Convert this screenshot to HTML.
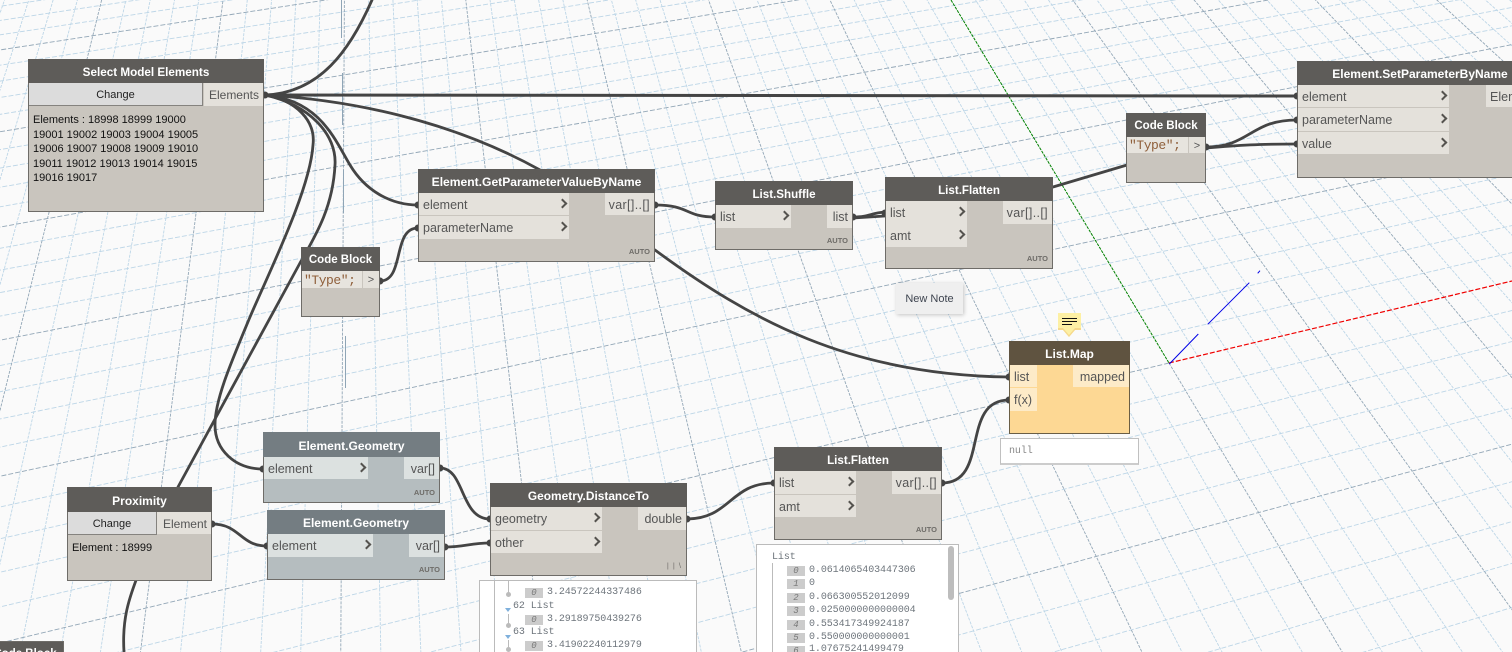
<!DOCTYPE html>
<html><head><meta charset="utf-8"><title>Dynamo graph</title>
<style>
html,body{margin:0;padding:0;width:1512px;height:652px;overflow:hidden;background:#fafafa}
body{font-family:"Liberation Sans",sans-serif}
#root{position:absolute;left:0;top:0;width:1512px;height:652px;overflow:clip;background:#fafafa}
svg.bg{position:absolute;left:0;top:0}
.n{position:absolute;box-sizing:border-box;background:#c9c5be;border:1px solid #6e6c68}
.h{position:absolute;left:-1px;right:-1px;top:-1px;height:24px;box-sizing:border-box;padding-top:2px;line-height:23px;background:#5e5c59;color:#fff;font-weight:bold;font-size:12px;text-align:center;white-space:nowrap;overflow:hidden}
.p{position:absolute;background:#e4e1db;color:#555;font-size:12.5px;line-height:22px;padding-top:1px;white-space:nowrap;box-sizing:border-box}
.l{padding-left:4px}
.l::after{content:"";position:absolute;right:3px;top:7px;width:5px;height:5px;border-top:2.4px solid #55534f;border-right:2.4px solid #55534f;transform:rotate(45deg)}
.o{text-align:right;padding-right:4px}
.a{position:absolute;right:4px;bottom:5px;font-size:7.5px;line-height:9px;font-weight:bold;color:#6e6c68}
.ch{position:absolute;background:#dcdcdc;border-right:1px solid #85837f;border-bottom:1px solid #85837f;box-sizing:border-box;text-align:center;font-size:11px;line-height:25px;color:#222}
.g{background:#b5bdbf}
.g .h{background:#747d82}
.g .p{background:#dce1e0}
.m{background:#fdd894;border-color:#6a5e45}
.m .h{background:#5f5340}
.m .p{background:#fdebc8}
.code{position:absolute;background:#e7e4de;color:#8f5f3a;font-family:"Liberation Mono",monospace;font-size:13px;line-height:19px;padding-left:2px;box-sizing:border-box;white-space:nowrap;letter-spacing:-.45px;overflow:hidden}
.gt{position:absolute;background:#e4e1db;color:#555;font-size:11px;line-height:19px;text-align:center}
.txt{position:absolute;font-size:11px;line-height:14.5px;color:#111;white-space:pre}
.w{position:absolute;background:#fff;border:1px solid #bbb;box-sizing:border-box;overflow:clip}
.t{position:absolute;font-family:"Liberation Mono",monospace;font-size:10px;line-height:12px;margin-top:1px;color:#6e757c;white-space:pre;letter-spacing:-.08px}
.i{position:absolute;width:18px;height:10px;margin-top:1px;background:#ccc;color:#777;font-family:"Liberation Mono",monospace;font-style:italic;font-size:9px;line-height:10px;text-align:center}
.note{position:absolute;left:896px;top:283px;width:67px;height:31px;background:#efefef;box-shadow:1px 1px 4px rgba(0,0,0,.22);font-size:11px;line-height:32px;text-align:center;color:#3f4550}
</style></head><body><div id="root">

<svg class="bg" width="1512" height="652" viewBox="0 0 1512 652" fill="none">
<!-- minor family B -->
<path stroke="#bdd6e7" stroke-width=".9" stroke-dasharray="3 1.2" d="M350 -1003L-236.6 700M350 -1003L-195.4 700M350 -1003L-154.1 700M350 -1003L-112.9 700M350 -1003L-30.5 700M350 -1003L10.7 700M350 -1003L52 700M350 -1003L93.2 700M350 -1003L175.6 700M350 -1003L216.8 700M350 -1003L258.1 700M350 -1003L299.3 700M350 -1003L381.7 700M350 -1003L422.9 700M350 -1003L464.2 700M350 -1003L505.4 700M350 -1003L587.8 700M350 -1003L629 700M350 -1003L670.3 700M350 -1003L711.5 700M350 -1003L793.9 700M350 -1003L835.1 700M350 -1003L876.4 700M350 -1003L917.6 700M350 -1003L1000 700M350 -1003L1041.2 700M350 -1003L1082.5 700M350 -1003L1123.7 700M350 -1003L1206.1 700M350 -1003L1247.3 700M350 -1003L1288.6 700M350 -1003L1329.8 700M350 -1003L1412.2 700M350 -1003L1453.4 700M350 -1003L1494.7 700M350 -1003L1535.9 700M350 -1003L1618.3 700M350 -1003L1659.5 700M350 -1003L1700.8 700M350 -1003L1742 700M350 -1003L1824.4 700M350 -1003L1865.6 700M350 -1003L1906.9 700M350 -1003L1948.1 700M350 -1003L2030.5 700M350 -1003L2071.7 700M350 -1003L2113 700M350 -1003L2154.2 700M350 -1003L2236.6 700M350 -1003L2277.8 700M350 -1003L2319.1 700"/>
<!-- minor family A -->
<path stroke="#bdd6e7" stroke-width=".9" stroke-dasharray="5 2" d="M6870 -1003L-50 1077M6870 -1003L-50 1020M6870 -1003L-50 966M6870 -1003L-50 914.5M6870 -1003L-50 819.5M6870 -1003L-50 775.5M6870 -1003L-50 733.5M6870 -1003L-50 693.4M6870 -1003L-50 618.6M6870 -1003L-50 583.7M6870 -1003L-50 550M6870 -1003L-50 518M6870 -1003L-50 457.7M6870 -1003L-50 429.3M6870 -1003L-50 401.9M6870 -1003L-50 375.5M6870 -1003L-50 325.7M6870 -1003L-50 302M6870 -1003L-50 279.4M6870 -1003L-50 257.4M6870 -1003L-50 215.6M6870 -1003L-50 195.9M6870 -1003L-50 176.6M6870 -1003L-50 158M6870 -1003L-50 122.5M6870 -1003L-50 105.5M6870 -1003L-50 89M6870 -1003L-50 73M6870 -1003L-50 42.4M6870 -1003L-50 27.9M6870 -1003L-50 13.6"/>
<!-- major family B -->
<path stroke="#93a7b7" stroke-width=".9" stroke-dasharray="3 1.2" d="M350 -1003L-71.7 700M350 -1003L134.4 700M350 -1003L340.5 700M350 -1003L546.6 700M350 -1003L752.7 700M350 -1003L958.8 700M350 -1003L1164.9 700M1169 363L1371 700M350 -1003L1577.1 700M350 -1003L1783.2 700M350 -1003L1989.3 700M350 -1003L2195.4 700"/>
<!-- major family A -->
<path stroke="#93a7b7" stroke-width=".9" stroke-dasharray="5 2" d="M6870 -1003L-50 866M1169 363L-50 655M6870 -1003L-50 487M6870 -1003L-50 350M6870 -1003L-50 236M6870 -1003L-50 140M6870 -1003L-50 57.6"/>
<!-- solid ticks on near-vertical line -->
<path stroke="#8fa5b6" stroke-width="1" d="M341.5 0V38M342.5 73V125M343.5 170V213M345.5 336V388"/>
<!-- axes -->
<path stroke="#008000" stroke-width="1" stroke-dasharray="3 1" d="M951 0L1169 363"/>
<path stroke="#f00000" stroke-width="1.2" stroke-dasharray="5 2" d="M1169 363L1512 281"/>
<path stroke="#0000e6" stroke-width="1" d="M1169.3 364L1198.3 334M1207.7 324.3L1249.3 282.7M1257.7 273.3L1260 270.7"/>
<!-- wires -->
<g stroke="#444" stroke-width="2.8" stroke-linecap="round">
<path stroke-width="3" d="M265 95L1297 96"/>
<path d="M265 95C320 93 350 50 372 0"/>
<path d="M265 95C350 100 450 120 540 170"/>
<path d="M265 95C320 100 335 140 350 165C365 190 390 205 418 205"/>
<path d="M265 95C295 100 316 120 313 145C310 190 270 270 250 317C230 365 215 400 215 425C215 450 235 469 263 469"/>
<path d="M265 95C310 105 337 135 335 165C333 205 318 232 300 263L178 487"/>
<path d="M140 570C128 600 122 620 124 652"/>
<path d="M380 281C405 281 392 228 418 228"/>
<path d="M655 205C690 205 685 217 715 217"/>
<path d="M853 217C870 217 870 213 885 212"/>
<path d="M853 218L885 216"/>
<path d="M655 250C750 320 850 375 1009 377"/>
<path d="M1053 187L1127 165"/>
<path d="M1206 147C1250 147 1250 120 1297 120"/>
<path d="M1206 148C1240 145 1260 144 1297 144"/>
<path d="M440 468C465 468 460 519 490 519"/>
<path d="M445 547C465 547 470 543 490 543"/>
<path d="M212 524C240 524 240 546 267 546"/>
<path d="M687 519C730 519 730 483 774 483"/>
<path d="M942 483C990 483 960 400 1009 400"/>
</g>
<!-- port nubs -->
<g fill="#444">
<circle cx="265" cy="95" r="3.5"/><circle cx="418" cy="205" r="3.5"/><circle cx="418" cy="228" r="3.5"/><circle cx="380" cy="281" r="3.5"/><circle cx="655" cy="205" r="3.5"/><circle cx="715" cy="217" r="3.5"/><circle cx="853" cy="217" r="3.5"/><circle cx="885" cy="213" r="3.5"/><circle cx="1206" cy="147" r="3.5"/><circle cx="1297" cy="96" r="3.5"/><circle cx="1297" cy="120" r="3.5"/><circle cx="1297" cy="144" r="3.5"/><circle cx="1009" cy="377" r="3.5"/><circle cx="1009" cy="400" r="3.5"/><circle cx="263" cy="469" r="3.5"/><circle cx="440" cy="468" r="3.5"/><circle cx="267" cy="546" r="3.5"/><circle cx="445" cy="547" r="3.5"/><circle cx="212" cy="524" r="3.5"/><circle cx="490" cy="519" r="3.5"/><circle cx="490" cy="543" r="3.5"/><circle cx="687" cy="519" r="3.5"/><circle cx="774" cy="483" r="3.5"/><circle cx="942" cy="483" r="3.5"/>
</g>
</svg>

<!-- Select Model Elements -->
<div class="n" style="left:28px;top:59px;width:236px;height:153px">
  <div class="h" style="font-size:11.7px">Select Model Elements</div>
  <div class="ch" style="left:0;top:23px;width:174px;height:23px">Change</div>
  <div class="p o" style="left:175px;top:23px;width:59px;height:23px;font-size:12px">Elements</div>
  <div class="txt" style="left:4px;top:53px">Elements : 18998 18999 19000
19001 19002 19003 19004 19005
19006 19007 19008 19009 19010
19011 19012 19013 19014 19015
19016 19017</div>
</div>

<!-- Code Block left -->
<div class="n" style="left:301px;top:247px;width:79px;height:70px">
  <div class="h" style="font-size:11.5px">Code Block</div>
  <div class="code" style="left:0;top:23px;width:60px;height:17px">"Type";</div>
  <div class="gt" style="left:61px;top:23px;width:16px;height:17px">&gt;</div>
</div>

<!-- GetParameterValueByName -->
<div class="n" style="left:418px;top:169px;width:237px;height:93px">
  <div class="h" style="font-size:12.1px">Element.GetParameterValueByName</div>
  <div class="p l" style="left:0;top:23px;width:150px;height:22px">element</div>
  <div class="p l" style="left:0;top:46px;width:150px;height:23px">parameterName</div>
  <div class="p o" style="left:186px;top:23px;width:49px;height:22px;letter-spacing:.35px">var[]..[]</div>
  <div class="a">AUTO</div>
</div>

<!-- List.Shuffle -->
<div class="n" style="left:715px;top:181px;width:138px;height:69px">
  <div class="h" style="font-size:11.6px">List.Shuffle</div>
  <div class="p l" style="left:0;top:23px;width:75px;height:23px">list</div>
  <div class="p o" style="left:111px;top:23px;width:25px;height:23px">list</div>
  <div class="a" style="bottom:4px">AUTO</div>
</div>

<!-- List.Flatten top -->
<div class="n" style="left:885px;top:177px;width:168px;height:92px">
  <div class="h" style="font-size:11.6px">List.Flatten</div>
  <div class="p l" style="left:0;top:23px;width:81px;height:23px">list</div>
  <div class="p l" style="left:0;top:46px;width:81px;height:23px">amt</div>
  <div class="p o" style="left:117px;top:23px;width:49px;height:23px;letter-spacing:.35px">var[]..[]</div>
  <div class="a">AUTO</div>
</div>

<!-- Code Block top -->
<div class="n" style="left:1126px;top:113px;width:80px;height:70px">
  <div class="h" style="font-size:11.5px">Code Block</div>
  <div class="code" style="left:0;top:23px;width:61px;height:16px;line-height:18px">"Type";</div>
  <div class="gt" style="left:62px;top:23px;width:16px;height:16px;line-height:18px">&gt;</div>
</div>

<!-- SetParameterByName -->
<div class="n" style="left:1297px;top:61px;width:246px;height:117px">
  <div class="h">Element.SetParameterByName</div>
  <div class="p l" style="left:0;top:23px;width:151px;height:22px">element</div>
  <div class="p l" style="left:0;top:46px;width:151px;height:23px">parameterName</div>
  <div class="p l" style="left:0;top:70px;width:151px;height:22px">value</div>
  <div class="p" style="left:188px;top:23px;width:56px;height:22px;padding-left:4px">Element</div>
</div>

<!-- New Note -->
<div class="note">New Note</div>

<!-- Note icon -->
<svg style="position:absolute;left:1056px;top:312px" width="27" height="28" viewBox="0 0 27 28">
  <path fill="#fdf0a4" d="M2 1H25V18H19L13 25L7 18H2Z"/>
  <path fill="#f6d98c" d="M2 16H7L13 23L19 16H25V18H19L13 25L7 18H2Z"/>
  <path stroke="#111" stroke-width="1" d="M6 6.5H21M6 9.5H21M6 12.5H16"/>
</svg>

<!-- List.Map -->
<div class="n m" style="left:1009px;top:341px;width:121px;height:93px">
  <div class="h" style="font-size:12px">List.Map</div>
  <div class="p" style="left:0;top:23px;width:27px;height:22px;padding-left:4px">list</div>
  <div class="p" style="left:0;top:46px;width:27px;height:23px;padding-left:4px">f(x)</div>
  <div class="p o" style="left:63px;top:23px;width:56px;height:22px">mapped</div>
</div>
<div class="w" style="left:1000px;top:438px;width:139px;height:27px;border-color:#c0c0c0;border-bottom:2px solid #ccc">
  <div class="t" style="left:8px;top:6px;color:#888">null</div>
</div>

<!-- Proximity -->
<div class="n" style="left:67px;top:487px;width:145px;height:94px">
  <div class="h" style="height:25px;line-height:24px">Proximity</div>
  <div class="ch" style="left:0;top:24px;width:89px;height:23px">Change</div>
  <div class="p o" style="left:89px;top:24px;width:54px;height:22px;font-size:12px">Element</div>
  <div class="txt" style="left:4px;top:53px">Element : 18999</div>
</div>

<!-- Element.Geometry 1 -->
<div class="n g" style="left:263px;top:432px;width:177px;height:71px">
  <div class="h" style="height:25px;line-height:24px">Element.Geometry</div>
  <div class="p l" style="left:0;top:24px;width:104px;height:22px">element</div>
  <div class="p o" style="left:140px;top:24px;width:35px;height:22px">var[]</div>
  <div class="a">AUTO</div>
</div>

<!-- Element.Geometry 2 -->
<div class="n g" style="left:267px;top:510px;width:178px;height:70px">
  <div class="h">Element.Geometry</div>
  <div class="p l" style="left:0;top:23px;width:105px;height:23px">element</div>
  <div class="p o" style="left:141px;top:23px;width:35px;height:23px">var[]</div>
  <div class="a">AUTO</div>
</div>

<!-- Geometry.DistanceTo -->
<div class="n" style="left:490px;top:483px;width:197px;height:93px">
  <div class="h" style="font-size:11.9px">Geometry.DistanceTo</div>
  <div class="p l" style="left:0;top:23px;width:111px;height:23px">geometry</div>
  <div class="p l" style="left:0;top:47px;width:111px;height:22px">other</div>
  <div class="p o" style="left:147px;top:23px;width:48px;height:23px">double</div>
  <div class="a" style="letter-spacing:1px;font-weight:normal">| | \</div>
</div>

<!-- List.Flatten bottom -->
<div class="n" style="left:774px;top:447px;width:168px;height:93px">
  <div class="h" style="font-size:11.6px">List.Flatten</div>
  <div class="p l" style="left:0;top:23px;width:81px;height:23px">list</div>
  <div class="p l" style="left:0;top:47px;width:81px;height:22px">amt</div>
  <div class="p o" style="left:117px;top:23px;width:49px;height:23px;letter-spacing:.35px">var[]..[]</div>
  <div class="a">AUTO</div>
</div>

<!-- Watch left -->
<div class="w" style="left:479px;top:580px;width:218px;height:72px;border-bottom:0">
  <div style="position:absolute;left:14px;top:0;width:1px;height:71px;background:#bbb"></div>
  <div style="position:absolute;left:28px;top:0;width:1px;height:12px;background:#bbb"></div>
  <div style="position:absolute;left:26px;top:11px;width:5px;height:5px;border-radius:3px;background:#bbb"></div>
  <div class="i" style="left:45px;top:6px">0</div><div class="t" style="left:67px;top:5px">3.24572244337486</div>
  <div style="position:absolute;left:25px;top:27px;width:0;height:0;border-left:3px solid transparent;border-right:3px solid transparent;border-top:4px solid #7fb0dc"></div>
  <div class="t" style="left:33px;top:19px">62 List</div>
  <div style="position:absolute;left:28px;top:33px;width:1px;height:11px;background:#bbb"></div>
  <div style="position:absolute;left:26px;top:42px;width:5px;height:5px;border-radius:3px;background:#bbb"></div>
  <div class="i" style="left:45px;top:33px">0</div><div class="t" style="left:67px;top:32px">3.29189750439276</div>
  <div style="position:absolute;left:25px;top:54px;width:0;height:0;border-left:3px solid transparent;border-right:3px solid transparent;border-top:4px solid #7fb0dc"></div>
  <div class="t" style="left:33px;top:45px">63 List</div>
  <div style="position:absolute;left:28px;top:59px;width:1px;height:9px;background:#bbb"></div>
  <div style="position:absolute;left:26px;top:66px;width:5px;height:5px;border-radius:3px;background:#bbb"></div>
  <div class="i" style="left:45px;top:59px">0</div><div class="t" style="left:67px;top:58px">3.41902240112979</div>
</div>

<!-- Watch right -->
<div class="w" style="left:756px;top:544px;width:203px;height:108px;border-bottom:0">
  <div class="t" style="left:15px;top:6px">List</div>
  <div style="position:absolute;left:15px;top:18px;width:1px;height:89px;background:#bbb"></div>
  <div style="position:absolute;left:191px;top:1px;width:6px;height:54px;border-radius:3px;background:#bdbdbd"></div>
  <div class="i" style="left:30px;top:20px">0</div><div class="t" style="left:52px;top:19px">0.0614065403447306</div>
  <div class="i" style="left:30px;top:33px">1</div><div class="t" style="left:52px;top:32px">0</div>
  <div class="i" style="left:30px;top:47px">2</div><div class="t" style="left:52px;top:46px">0.066300552012099</div>
  <div class="i" style="left:30px;top:60px">3</div><div class="t" style="left:52px;top:59px">0.0250000000000004</div>
  <div class="i" style="left:30px;top:74px">4</div><div class="t" style="left:52px;top:73px">0.553417349924187</div>
  <div class="i" style="left:30px;top:87px">5</div><div class="t" style="left:52px;top:86px">0.550000000000001</div>
  <div class="i" style="left:30px;top:100px;height:7px;overflow:clip">6</div><div class="t" style="left:52px;top:98px;line-height:12px;height:8px;overflow:clip">1.07675241499479</div>
</div>

<!-- Code Block bottom-left (clipped) -->
<div class="n" style="left:-14px;top:641px;width:78px;height:11px;border-bottom:0;overflow:clip">
  <div class="h" style="font-size:11.5px;height:12px;overflow:clip">Code Block</div>
</div>

</div></body></html>
